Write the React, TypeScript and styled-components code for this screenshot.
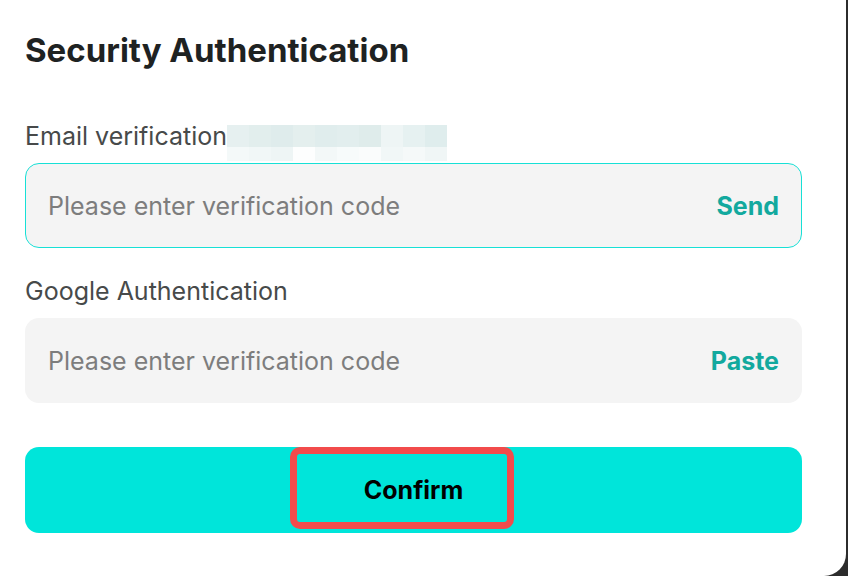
import React from "react";
import styled, { createGlobalStyle } from "styled-components";

const GlobalStyle = createGlobalStyle`
  html, body {
    margin: 0;
    padding: 0;
    background: #2c2c2c;
    overflow: hidden;
  }
  body {
    font-family: "Inter", "Noto Sans", sans-serif;
  }
`;

const Modal = styled.div`
  width: 846px;
  height: 576px;
  background: #ffffff;
  border-radius: 0 0 22px 0;
  box-sizing: border-box;
  padding: 30px 44px 0 25px;
  display: flex;
  flex-direction: column;
`;

const Title = styled.h2`
  margin: 0;
  font-size: 33px;
  line-height: 40px;
  font-weight: 700;
  color: #1e2222;
  letter-spacing: 0;
`;

const Form = styled.div`
  margin-top: 51px;
  display: flex;
  flex-direction: column;
`;

const Field = styled.div`
  display: flex;
  flex-direction: column;
  gap: 12px;
  margin-bottom: 28px;
`;

const LabelRow = styled.div`
  display: flex;
  align-items: flex-start;
  height: 30px;
`;

const Label = styled.label`
  font-size: 25px;
  line-height: 30px;
  color: #474a4a;
`;

const Mosaic = styled.div`
  display: grid;
  grid-template-columns: repeat(10, 22px);
  grid-template-rows: 22px 14px;
  margin-top: 4px;
`;

const Tile = styled.span<{ $c: string }>`
  background: ${(p) => p.$c};
`;

const InputBox = styled.div<{ $active?: boolean }>`
  height: 85px;
  box-sizing: border-box;
  border-radius: 14px;
  background: #f4f4f4;
  border: 1px solid ${(p) => (p.$active ? "#17e0d6" : "transparent")};
  display: flex;
  align-items: center;
  padding: 0 22px 0 22px;
`;

const Input = styled.input`
  flex: 1;
  border: none;
  outline: none;
  background: transparent;
  font-family: inherit;
  font-size: 25px;
  color: #333;
  padding: 0;
  &::placeholder {
    color: #7d7d7d;
  }
`;

const Action = styled.button`
  border: none;
  background: none;
  padding: 0;
  font-family: inherit;
  font-size: 25px;
  font-weight: 700;
  color: #12a99e;
  cursor: pointer;
`;

const ConfirmWrap = styled.div`
  position: relative;
  margin-top: 16px;
`;

const ConfirmButton = styled.button`
  width: 100%;
  height: 86px;
  border: none;
  border-radius: 14px;
  background: #00e5da;
  font-family: inherit;
  font-size: 25px;
  font-weight: 700;
  color: #000;
  cursor: pointer;
`;

const Highlight = styled.div`
  position: absolute;
  left: 265px;
  top: 0;
  width: 224px;
  height: 82px;
  box-sizing: border-box;
  border: 7px solid #f24b4b;
  border-radius: 10px;
  pointer-events: none;
`;

const topRow = ["#e6f0f0", "#e2eeed", "#dfecec", "#e4efee", "#e0eded", "#e2eeee", "#dfeceb", "#eef5f5", "#e6f1f1", "#dfeded"];
const bottomRow = ["#f4f9f9", "#f1f7f7", "#eef5f5", "#fdfefe", "#f3f8f8", "#f7fbfb", "#fafcfc", "#f1f7f7", "#f5f9f9", "#f0f6f6"];

export default function App() {
  return (
    <>
      <GlobalStyle />
      <Modal>
        <Title>Security Authentication</Title>
        <Form>
          <Field>
            <LabelRow>
              <Label>Email verification</Label>
              <Mosaic>
                {topRow.map((c, i) => (
                  <Tile key={"t" + i} $c={c} />
                ))}
                {bottomRow.map((c, i) => (
                  <Tile key={"b" + i} $c={c} />
                ))}
              </Mosaic>
            </LabelRow>
            <InputBox $active>
              <Input placeholder="Please enter verification code" />
              <Action>Send</Action>
            </InputBox>
          </Field>
          <Field>
            <LabelRow>
              <Label>Google Authentication</Label>
            </LabelRow>
            <InputBox>
              <Input placeholder="Please enter verification code" />
              <Action>Paste</Action>
            </InputBox>
          </Field>
          <ConfirmWrap>
            <ConfirmButton>Confirm</ConfirmButton>
            <Highlight />
          </ConfirmWrap>
        </Form>
      </Modal>
    </>
  );
}
